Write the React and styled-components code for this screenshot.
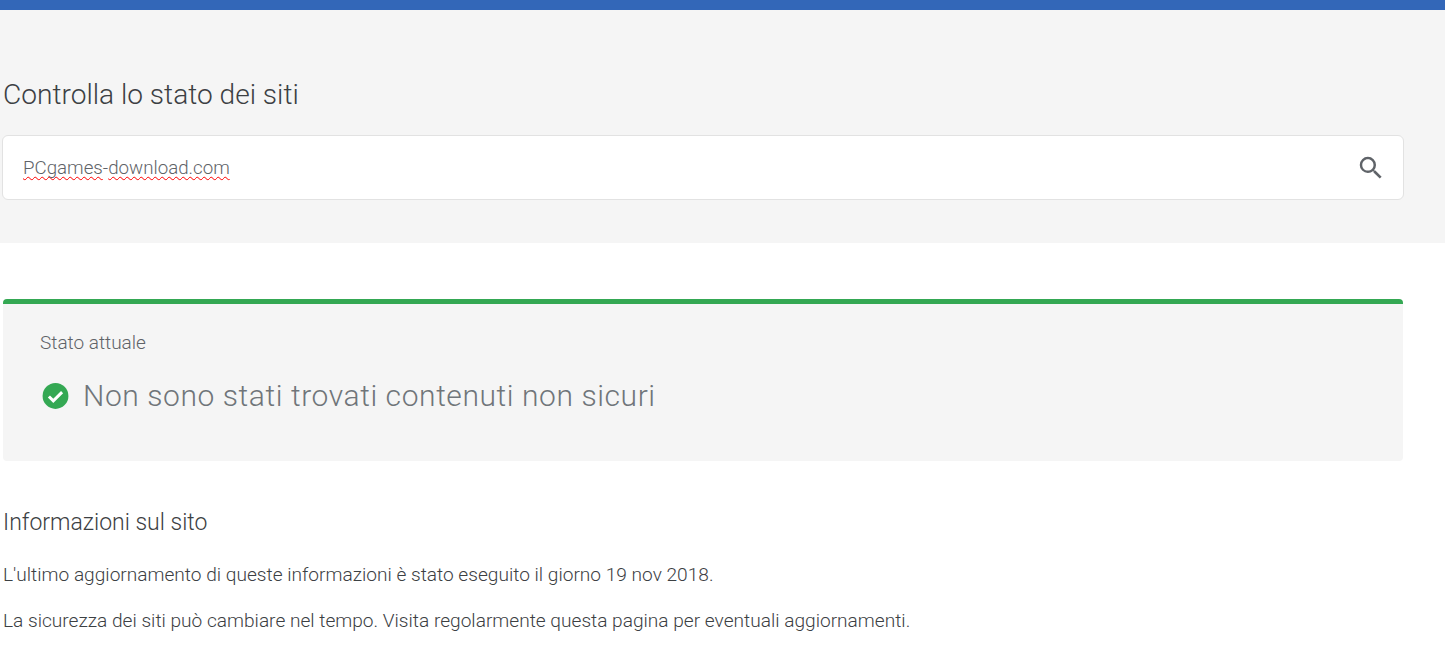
import React from 'react';
import styled, { createGlobalStyle } from 'styled-components';

const GlobalStyle = createGlobalStyle`
  html, body {
    margin: 0;
    padding: 0;
    background: #fff;
    font-family: Roboto, "Liberation Sans", sans-serif;
    font-weight: 300;
  }
`;

const TopBar = styled.div`
  height: 10px;
  background: #3367b8;
`;

const SearchSection = styled.section`
  height: 233px;
  background: #f5f5f5;
  padding: 65px 41px 0 2px;
  box-sizing: border-box;
`;

const Heading = styled.h1`
  margin: 0 0 20px;
  padding-left: 1px;
  font-size: 28.1px;
  line-height: 40px;
  font-weight: 300;
  color: #3c4043;
`;

const SearchBox = styled.div`
  height: 65px;
  box-sizing: border-box;
  background: #fff;
  border: 1px solid #e2e2e2;
  border-radius: 6px;
  display: flex;
  align-items: center;
  justify-content: space-between;
  padding: 0 17px 0 20px;
`;

const SearchText = styled.span`
  font-size: 18.72px;
  line-height: 24px;
  color: #5f6368;
`;

const Misspelled = styled.span`
  text-decoration: underline wavy #f00 1.4px;
  text-underline-offset: 2px;
  text-decoration-skip-ink: none;
`;

const Main = styled.main`
  padding: 56px 42px 0 3px;
`;

const StatusCard = styled.div`
  height: 162px;
  box-sizing: border-box;
  background: #f5f5f5;
  border-top: 5px solid #34a853;
  border-radius: 4px;
  padding: 27px 37px 0;
`;

const StatusLabel = styled.div`
  font-size: 19px;
  line-height: 24px;
  color: #5f6368;
`;

const StatusRow = styled.div`
  display: flex;
  align-items: center;
  gap: 12px;
  margin-top: 21px;
`;

const StatusText = styled.span`
  font-size: 30px;
  line-height: 40px;
  letter-spacing: 0.58px;
  color: #70757a;
`;

const InfoTitle = styled.h2`
  margin: 48px 0 0;
  font-size: 23px;
  line-height: 28px;
  font-weight: 300;
  color: #3c4043;
`;

const InfoText = styled.p`
  margin: ${(p) => p.$gap}px 0 0;
  font-size: 19.13px;
  line-height: 24px;
  color: #3c4043;
`;

function SearchIcon() {
  return (
    <svg width="30" height="30" viewBox="0 0 24 24" fill="#5f6368">
      <path d="M15.5 14h-.79l-.28-.27A6.47 6.47 0 0 0 16 9.5 6.5 6.5 0 1 0 9.5 16c1.61 0 3.09-.59 4.23-1.57l.27.28v.79l5 4.99L20.49 19l-4.99-5zm-6 0C7.01 14 5 11.99 5 9.5S7.01 5 9.5 5 14 7.01 14 9.5 11.99 14 9.5 14z" />
    </svg>
  );
}

function CheckIcon() {
  return (
    <svg width="31" height="31" viewBox="0 0 24 24">
      <circle cx="12" cy="11.6" r="10" fill="#34a853" />
      <path d="M6.9 12l3.4 3.4 6.8-6.8" fill="none" stroke="#fff" strokeWidth="2.3" />
    </svg>
  );
}

export default function App() {
  return (
    <>
      <GlobalStyle />
      <TopBar />
      <SearchSection>
        <Heading>Controlla lo stato dei siti</Heading>
        <SearchBox>
          <SearchText>
            <Misspelled>PCgames</Misspelled>-<Misspelled>download.com</Misspelled>
          </SearchText>
          <SearchIcon />
        </SearchBox>
      </SearchSection>
      <Main>
        <StatusCard>
          <StatusLabel>Stato attuale</StatusLabel>
          <StatusRow>
            <CheckIcon />
            <StatusText>Non sono stati trovati contenuti non sicuri</StatusText>
          </StatusRow>
        </StatusCard>
        <InfoTitle>Informazioni sul sito</InfoTitle>
        <InfoText $gap={26}>L'ultimo aggiornamento di queste informazioni è stato eseguito il giorno 19 nov 2018.</InfoText>
        <InfoText $gap={22}>La sicurezza dei siti può cambiare nel tempo. Visita regolarmente questa pagina per eventuali aggiornamenti.</InfoText>
      </Main>
    </>
  );
}
